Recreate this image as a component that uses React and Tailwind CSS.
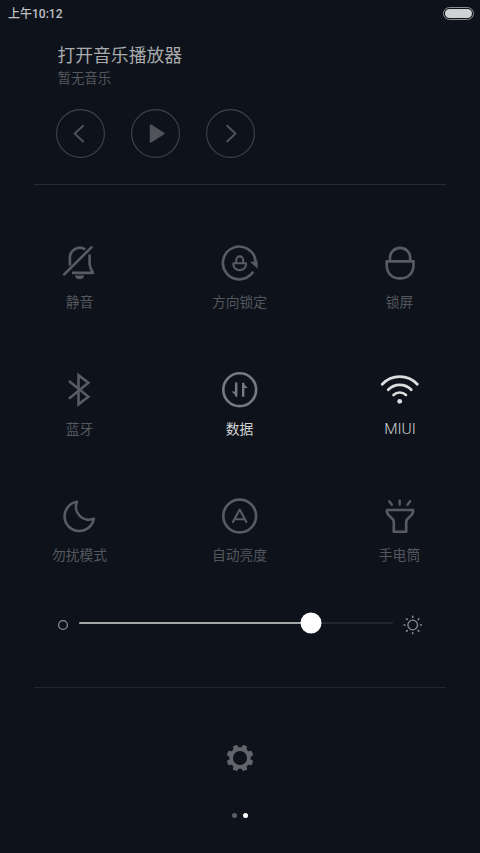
import clsx from 'clsx';

function Icon({ children, className }) {
  return (
    <svg
      viewBox="0 0 40 40"
      className={clsx('w-10 h-10 shrink-0', className)}
      fill="none"
      stroke="currentColor"
      strokeWidth="2.6"
    >
      {children}
    </svg>
  );
}

const MuteIcon = (
  <>
    <path d="M9.9 22.6V14.8A9.9 9.9 0 0 1 25.2 6.4M29.6 11.6V21.4Q30.2 25.6 33 29.9H12" strokeLinejoin="round" />
    <path d="M4.2 31.4L31.4 4.4" strokeLinecap="round" />
    <path d="M15 32.6H24.2A4.6 3.6 0 0 1 15 32.6Z" fill="currentColor" stroke="none" />
  </>
);

const RotationIcon = (
  <>
    <path d="M32.6 29.6A16.4 16.4 0 1 1 35.6 18" strokeLinecap="round" />
    <path d="M30.2 19L37.6 18V25.6Z" fill="currentColor" stroke="none" />
    <path d="M16.3 20V16.8A3.4 3.4 0 0 1 23.1 16.8V20" strokeWidth="2.1" />
    <path d="M13.4 20.2H26V21.4A6.3 5.7 0 0 1 13.4 21.4Z" strokeWidth="2.1" strokeLinejoin="round" />
  </>
);

const LockIcon = (
  <>
    <path d="M10 18V14.8A10.1 9.9 0 0 1 30.2 14.8V18" />
    <path d="M6.7 18.4H33.5V22C33.5 30.4 28 35.4 20.1 35.4S6.7 30.4 6.7 22Z" strokeLinejoin="round" />
  </>
);

const BluetoothIcon = (
  <path d="M9.8 11.7L28.4 26.7L18.5 34.4V5.2L28.4 12.7L9.8 27.9" strokeLinecap="round" />
);

const DataIcon = (
  <>
    <circle cx="19.7" cy="19.7" r="16.4" />
    <path d="M16.2 12.6V26.4M23.2 26.8V13" strokeWidth="2.4" />
    <path d="M17.2 27L11.6 21.4H16V27ZM22.2 12.4L27.8 18H23.4V12.4Z" fill="currentColor" stroke="none" />
  </>
);

const WifiIcon = (
  <>
    <path d="M2.2 14.2A24 24 0 0 1 37.3 14.2" strokeWidth="2.8" strokeLinecap="round" />
    <path d="M8.2 19.8A16 16 0 0 1 31.3 19.8" strokeWidth="2.7" strokeLinecap="round" />
    <path d="M13.5 25A9 9 0 0 1 26 25" strokeWidth="2.6" strokeLinecap="round" />
    <circle cx="19.7" cy="31.3" r="2.4" fill="currentColor" stroke="none" />
  </>
);

const MoonIcon = (
  <path d="M17 5.8A14.7 14.7 0 1 0 33.8 22.6A12.8 12.8 0 0 1 17 5.8Z" strokeLinejoin="round" />
);

const AutoIcon = (
  <>
    <circle cx="19.7" cy="20" r="16.4" />
    <path d="M13 26L19.7 13.6L26.4 26M15.4 23.2H24" strokeWidth="2.1" strokeLinecap="round" strokeLinejoin="round" />
  </>
);

const TorchIcon = (
  <>
    <path d="M7 14H33V15.6C33 20.5 26.2 21.5 26.2 26V35.8H13.8V26C13.8 21.5 7 20.5 7 15.6Z" strokeLinejoin="round" />
    <path d="M19.7 4.6V8.6M9.2 5.2L11.9 8.8M30.2 5.2L27.5 8.8" strokeWidth="2.4" strokeLinecap="round" />
  </>
);

const toggles = [
  { label: '静音', icon: MuteIcon },
  { label: '方向锁定', icon: RotationIcon },
  { label: '锁屏', icon: LockIcon },
  { label: '蓝牙', icon: BluetoothIcon },
  { label: '数据', icon: DataIcon, iconColor: 'text-[#777a80]', textColor: 'text-[#d2d3d5]' },
  { label: 'MIUI', icon: WifiIcon, iconColor: 'text-[#dcddde]', textColor: 'text-[#d0d1d3]' },
  { label: '勿扰模式', icon: MoonIcon },
  { label: '自动亮度', icon: AutoIcon },
  { label: '手电筒', icon: TorchIcon },
];

function Toggle({ label, icon, iconColor = 'text-[#585b62]', textColor = 'text-[#54575e]' }) {
  return (
    <button className="flex flex-col items-center">
      <Icon className={iconColor}>{icon}</Icon>
      <span
        className={clsx(
          'mt-[9px] leading-5',
          label === 'MIUI' ? 'text-[15.4px] font-light' : 'text-[13.8px] -translate-x-[0.5px]',
          textColor
        )}
      >
        {label}
      </span>
    </button>
  );
}

function MediaButton({ label, children }) {
  return (
    <button aria-label={label} className="w-[49px] h-[49px]">
      <svg viewBox="0 0 49 49" className="w-full h-full" fill="none" stroke="#50535a" strokeWidth="2">
        <circle cx="24.5" cy="24.5" r="23.9" stroke="#3f4249" strokeWidth="1.1" />
        {children}
      </svg>
    </button>
  );
}

function BrightnessSlider({ value }) {
  return (
    <div className="flex items-center pl-[57px] pr-[57px] h-6">
      <svg viewBox="0 0 12 12" className="w-3 h-3 mt-[3px]" fill="none" stroke="#8a8c90" strokeWidth="1.3">
        <circle cx="6" cy="6" r="4.4" />
      </svg>
      <div className="relative ml-[10px] w-[314px] h-[2px] rounded-full bg-[#22262e]">
        <div className="h-full rounded-full bg-[#a3a5a8]" style={{ width: `${value}%` }} />
        <div
          className="absolute top-1/2 w-[21px] h-[21px] rounded-full bg-white -translate-x-1/2 -translate-y-1/2"
          style={{ left: `${value}%` }}
        />
      </div>
      <svg
        viewBox="0 0 20 20"
        className="w-5 h-5 ml-[10px] mt-[3px] shrink-0"
        fill="none"
        stroke="#8a8c90"
        strokeWidth="1.3"
        strokeLinecap="round"
      >
        <circle cx="9.7" cy="10" r="4.8" />
        {[0, 45, 90, 135, 180, 225, 270, 315].map((a) => (
          <path key={a} d="M9.7 1.4V2.2" strokeWidth="1.6" transform={`rotate(${a} 9.7 10)`} />
        ))}
      </svg>
    </div>
  );
}

function GearIcon() {
  return (
    <svg viewBox="0 0 28 28" className="w-7 h-7" fill="#62656b">
      <circle cx="14" cy="14" r="8.9" fill="none" stroke="#62656b" strokeWidth="3.6" />
      {[22.5, 67.5, 112.5, 157.5, 202.5, 247.5, 292.5, 337.5].map((a) => (
        <path
          key={a}
          d="M10.9 5.5L11.5 1.4Q11.6 0.6 12.4 0.6H15.6Q16.4 0.6 16.5 1.4L17.1 5.5Z"
          transform={`rotate(${a} 14 14)`}
        />
      ))}
    </svg>
  );
}

export default function App() {
  return (
    <div className="w-[480px] h-[853px] flex flex-col overflow-hidden antialiased bg-[#0e131b] font-['Roboto','Noto_Sans_CJK_SC',sans-serif]">
      {/* Status bar */}
      <header className="flex items-center justify-between h-[26px] pl-2 pr-[6px]">
        <span className="text-[12px] font-medium leading-5 pt-[2px] text-[#bfc0c3]">上午10:12</span>
        <div className="w-[31px] h-[13px] rounded-full border border-[#8b8d91] p-[1px]">
          <div className="w-full h-full rounded-full bg-[#d0d1d2]" />
        </div>
      </header>

      {/* Music player */}
      <section className="h-[158px] pl-[57.5px] pt-[18px]">
        <h1 className="text-[17.8px] leading-6 text-[#a9abae]">打开音乐播放器</h1>
        <p className="text-[13.4px] leading-5 mt-[1px] text-[#54575e]">暂无音乐</p>
        <div className="flex gap-[25.7px] mt-[20px] -ml-[1.3px]">
          <MediaButton label="上一首">
            <path d="M27.6 16.2L18.8 24.6L27.6 33" />
          </MediaButton>
          <MediaButton label="播放">
            <path d="M19.8 16.3V32.7L32.6 24.5Z" fill="#50535a" strokeLinejoin="round" />
          </MediaButton>
          <MediaButton label="下一首">
            <path d="M20.6 16.2L29.4 24.6L20.6 33" />
          </MediaButton>
        </div>
      </section>
      <div className="h-px mx-[34px] bg-[#262a31]" />

      {/* Toggles */}
      <section className="grid grid-cols-3 grid-rows-[127px_126px_70px] h-[323px] mt-[58px]">
        {toggles.map((toggle) => (
          <Toggle key={toggle.label} {...toggle} />
        ))}
      </section>

      {/* Brightness */}
      <section className="mt-[45px]">
        <BrightnessSlider value={73.8} />
      </section>
      <div className="h-px mt-[52px] mx-[34px] bg-[#22262d]" />

      {/* Footer */}
      <footer className="flex flex-col items-center pt-[56px]">
        <GearIcon />
        <div className="flex items-center gap-[6px] mt-[41px]">
          <span className="w-[5px] h-[5px] rounded-full bg-[#5b5e65]" />
          <span className="w-[5px] h-[5px] rounded-full bg-white" />
        </div>
      </footer>
    </div>
  );
}
